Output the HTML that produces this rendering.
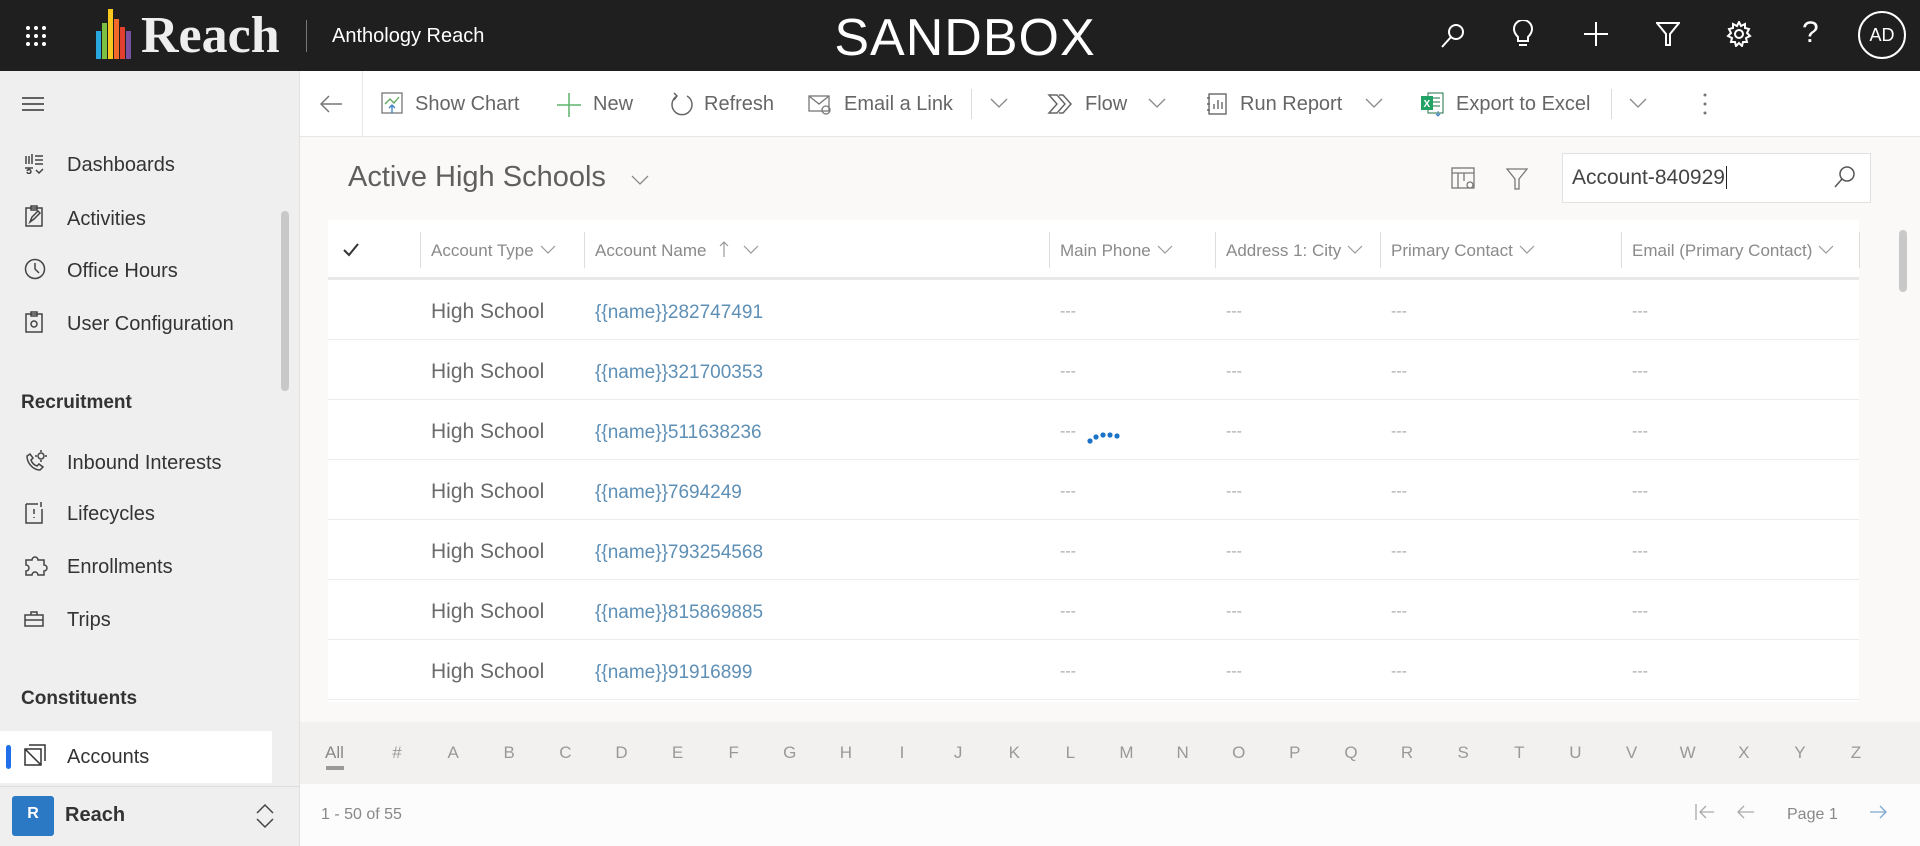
<!DOCTYPE html>
<html><head><meta charset="utf-8">
<style>
*{box-sizing:border-box;margin:0;padding:0}
body{width:1920px;height:846px;overflow:hidden;font-family:"Liberation Sans",sans-serif;background:#faf9f8;position:relative}
.a{position:absolute;white-space:nowrap}
#top{left:0;top:0;width:1920px;height:71px;background:#1f1f1f}
#side{left:0;top:71px;width:300px;height:775px;background:#efefef;border-right:1px solid #e1e1e1}
.nav{left:67px;font-size:20px;color:#333}
.sec{left:21px;font-size:19px;color:#333;font-weight:bold}
.ic{left:24px}
#cmd{left:300px;top:71px;width:1620px;height:66px;background:#fff;border-bottom:1px solid #e6e6e6}
.cb{font-size:20px;color:#666;top:93px}
.hd{font-size:17px;color:#8a8a8a;top:241px}
.hd svg{margin-left:6px;vertical-align:2px}
.sep{width:1px;background:#ddd}
.rt{font-size:21px;color:#6a6a6a}
.lk{font-size:19px;color:#5e8fb5}
.ds{font-size:16px;color:#aaa}
.al{font-size:17px;color:#999;top:743px}
</style></head><body>
<div id="top" class="a"></div>
<svg class="a" style="left:25px;top:25px" width="22" height="22" viewBox="0 0 22 22" fill="#fff"><circle cx="3" cy="3" r="2"/><circle cx="11" cy="3" r="2"/><circle cx="19" cy="3" r="2"/><circle cx="3" cy="11" r="2"/><circle cx="11" cy="11" r="2"/><circle cx="19" cy="11" r="2"/><circle cx="3" cy="19" r="2"/><circle cx="11" cy="19" r="2"/><circle cx="19" cy="19" r="2"/></svg>
<svg class="a" style="left:96px;top:9px" width="36" height="50"><rect x="0" y="22" width="5" height="28" fill="#29a8e0"/><rect x="6" y="14" width="5" height="36" fill="#7cc142"/><rect x="12" y="0" width="5" height="50" fill="#f7c81e"/><rect x="18" y="10" width="5" height="40" fill="#f26b2a"/><rect x="24" y="18" width="5" height="32" fill="#e1402f"/><rect x="30" y="22" width="5" height="28" fill="#7b4fa0"/></svg>
<div class="a" style="left:141px;top:6px;font-family:'Liberation Serif',serif;font-weight:bold;font-size:52px;color:#eee">Reach</div>
<div class="a" style="left:306px;top:20px;width:1px;height:32px;background:#777"></div>
<div class="a" style="left:332px;top:25px;font-size:20px;color:#fff">Anthology Reach</div>
<div class="a" style="left:0;width:1930px;text-align:center;top:8px;font-size:52px;color:#fff;letter-spacing:1px">SANDBOX</div>
<svg class="a" style="left:1440px;top:22px" width="26" height="28" fill="none" stroke="#fff" stroke-width="2"><circle cx="16" cy="10" r="7"/><path d="M11 15L2 25"/></svg>
<svg class="a" style="left:1512px;top:20px" width="22" height="28" fill="none" stroke="#fff" stroke-width="2"><path d="M6 17C2 13 2 10 2 9a9 9 0 0118 0c0 1 0 4-4 8v4H6z"/><path d="M7 25h8"/></svg>
<svg class="a" style="left:1583px;top:21px" width="26" height="26" stroke="#fff" stroke-width="2"><path d="M13 1v24M1 13h24"/></svg>
<svg class="a" style="left:1656px;top:21px" width="24" height="26" fill="none" stroke="#fff" stroke-width="2"><path d="M1 2h22L14 13v11h-4V13z"/></svg>
<svg class="a" style="left:1726px;top:21px" width="26" height="26" fill="none" stroke="#fff" stroke-width="2"><circle cx="13" cy="13" r="4"/><path d="M13 1l2 4 4-2 0 4 4 1-2 4 3 3-4 2 1 4-4 0-1 4-3-3-3 3-1-4-4 0 1-4-4-2 3-3-2-4 4-1 0-4 4 2z"/></svg>
<div class="a" style="left:1802px;top:16px;font-size:30px;color:#fff;font-weight:300">?</div>
<div class="a" style="left:1858px;top:11px;width:48px;height:48px;border:2px solid #fff;border-radius:50%;color:#fff;font-size:18px;text-align:center;line-height:44px">AD</div>

<div id="side" class="a"></div>
<svg class="a" style="left:22px;top:97px" width="22" height="14" stroke="#333" stroke-width="1.5"><path d="M0 1h22M0 7h22M0 13h22"/></svg>
<div class="a" style="left:281px;top:211px;width:8px;height:180px;background:#c8c8c8;border-radius:4px"></div>
<svg class="a ic" style="top:154px" width="20" height="20" fill="none" stroke="#444" stroke-width="1.5"><path d="M2 2v8M5 2v8M8 0v10M11 2h8M11 6h8M11 10h8M1 14h8M3 18a2 2 0 100-1M12 16l3 3 4-4"/></svg>
<div class="a nav" style="top:154px">Dashboards</div>
<svg class="a ic" style="top:205px" width="20" height="22" fill="none" stroke="#444" stroke-width="1.5"><rect x="2" y="3" width="16" height="18"/><path d="M7 1h6v4H7zM6 17l2-5 6-6 2 2-6 6z"/></svg>
<div class="a nav" style="top:208px">Activities</div>
<svg class="a ic" style="top:258px" width="22" height="22" fill="none" stroke="#444" stroke-width="1.5"><circle cx="11" cy="11" r="9.5"/><path d="M11 5v6l4 4"/></svg>
<div class="a nav" style="top:260px">Office Hours</div>
<svg class="a ic" style="top:311px" width="20" height="22" fill="none" stroke="#444" stroke-width="1.5"><rect x="2" y="3" width="16" height="18"/><path d="M7 1h6v4H7z"/><circle cx="10" cy="13" r="3"/></svg>
<div class="a nav" style="top:313px">User Configuration</div>
<div class="a sec" style="top:392px">Recruitment</div>
<svg class="a ic" style="top:450px" width="24" height="22" fill="none" stroke="#444" stroke-width="1.5"><path d="M3 6c0 7 6 14 13 14l3-3-4-3-2 2c-3-1-5-3-6-6l2-2-3-4z"/><circle cx="17" cy="6" r="3"/><path d="M17 0v2M17 10v2M11 6h2M21 6h2"/></svg>
<div class="a nav" style="top:452px">Inbound Interests</div>
<svg class="a ic" style="top:501px" width="20" height="24" fill="none" stroke="#444" stroke-width="1.5"><path d="M2 3h12M2 3v19h16V8"/><path d="M10 8v5M10 16v1M17 1v5"/></svg>
<div class="a nav" style="top:503px">Lifecycles</div>
<svg class="a ic" style="top:554px" width="24" height="22" fill="none" stroke="#444" stroke-width="1.5"><path d="M2 6h6a3 3 0 016 0h6v5a3 3 0 010 6v4h-6a3 3 0 00-6 0H2v-4a3 3 0 000-6z"/></svg>
<div class="a nav" style="top:556px">Enrollments</div>
<svg class="a ic" style="top:611px" width="20" height="16" fill="none" stroke="#444" stroke-width="1.5"><rect x="1" y="4" width="18" height="11"/><path d="M7 4V1h6v3M1 9h18"/></svg>
<div class="a nav" style="top:609px">Trips</div>
<div class="a sec" style="top:688px">Constituents</div>
<div class="a" style="left:0;top:731px;width:272px;height:52px;background:#fff"></div>
<div class="a" style="left:6px;top:745px;width:5px;height:24px;background:#1f6feb;border-radius:3px"></div>
<svg class="a ic" style="top:744px" width="22" height="22" fill="none" stroke="#333" stroke-width="1.5"><path d="M1 5h16v16H1zM5 1h16v16M1 5l16 16"/></svg>
<div class="a nav" style="top:746px">Accounts</div>
<div class="a" style="left:0;top:786px;width:300px;height:1px;background:#ddd"></div>
<div class="a" style="left:12px;top:796px;width:42px;height:40px;background:#2b78c5;border-radius:3px;color:#fff;font-weight:bold;font-size:16px;text-align:center;line-height:36px">R</div>
<div class="a" style="left:65px;top:804px;font-size:20px;color:#333;font-weight:bold">Reach</div>
<svg class="a" style="left:255px;top:803px" width="20" height="26" fill="none" stroke="#444" stroke-width="1.5"><path d="M2 10l8-8 8 8M2 16l8 8 8-8"/></svg>

<div id="cmd" class="a"></div>
<svg class="a" style="left:320px;top:95px" width="22" height="18" fill="none" stroke="#777" stroke-width="1.5"><path d="M22 9H2M9 1L1 9l8 8"/></svg>
<div class="a sep" style="left:362px;top:71px;height:66px;background:#e6e6e6"></div>
<svg class="a" style="left:381px;top:92px" width="22" height="22" fill="none" stroke="#777" stroke-width="1.3"><rect x="1" y="1" width="20" height="20"/><path d="M4 12l5-5 4 4 5-6" stroke="#5aa55a"/><path d="M11 21v-8M8 16l3-3 3 3" stroke="#3b7fc4"/></svg>
<div class="a cb" style="left:415px">Show Chart</div>
<svg class="a" style="left:557px;top:93px" width="24" height="24" stroke="#5fb36b" stroke-width="1.5"><path d="M12 0v24M0 12h24"/></svg>
<div class="a cb" style="left:593px">New</div>
<svg class="a" style="left:669px;top:92px" width="26" height="26" fill="none" stroke="#666" stroke-width="1.5"><path d="M8 4a10 10 0 1010 0M5 1l3 3-3 4"/></svg>
<div class="a cb" style="left:704px">Refresh</div>
<svg class="a" style="left:808px;top:94px" width="26" height="22" fill="none" stroke="#777" stroke-width="1.3"><rect x="1" y="2" width="20" height="15"/><path d="M1 2l10 8 10-8"/><circle cx="18" cy="16" r="4"/></svg>
<div class="a cb" style="left:844px">Email a Link</div>
<div class="a sep" style="left:971px;top:89px;height:30px"></div>
<svg class="a" style="left:990px;top:98px" width="18" height="10" fill="none" stroke="#888" stroke-width="1.3"><path d="M1 1l8 8 8-8"/></svg>
<svg class="a" style="left:1047px;top:93px" width="26" height="22" fill="none" stroke="#666" stroke-width="1.5"><path d="M2 2h8l8 9-8 9H2l8-9zM12 2h4l8 9-8 9h-4"/></svg>
<div class="a cb" style="left:1085px">Flow</div>
<svg class="a" style="left:1148px;top:98px" width="18" height="10" fill="none" stroke="#888" stroke-width="1.3"><path d="M1 1l8 8 8-8"/></svg>
<svg class="a" style="left:1206px;top:92px" width="22" height="24" fill="none" stroke="#666" stroke-width="1.4"><rect x="3" y="2" width="17" height="20"/><path d="M8 17v-5M12 17V8M16 17v-7M1 6h3M1 12h3M1 18h3"/></svg>
<div class="a cb" style="left:1240px">Run Report</div>
<svg class="a" style="left:1365px;top:98px" width="18" height="10" fill="none" stroke="#888" stroke-width="1.3"><path d="M1 1l8 8 8-8"/></svg>
<svg class="a" style="left:1420px;top:91px" width="26" height="26"><rect x="8" y="2" width="15" height="20" fill="#fff" stroke="#1d7044"/><path d="M11 7h9M11 11h9M11 15h9" stroke="#1d7044"/><rect x="1" y="5" width="12" height="14" fill="#21a366"/><text x="3.5" y="16" font-size="10" fill="#fff" font-family="Liberation Sans" font-weight="bold">X</text><path d="M18 20v5M16 23l2 2 2-2" stroke="#3b7fc4" fill="none"/></svg>
<div class="a cb" style="left:1456px">Export to Excel</div>
<div class="a sep" style="left:1611px;top:89px;height:30px"></div>
<svg class="a" style="left:1629px;top:98px" width="18" height="10" fill="none" stroke="#888" stroke-width="1.3"><path d="M1 1l8 8 8-8"/></svg>
<svg class="a" style="left:1702px;top:92px" width="6" height="24" fill="#777"><circle cx="3" cy="3" r="1.5"/><circle cx="3" cy="12" r="1.5"/><circle cx="3" cy="21" r="1.5"/></svg>

<div class="a" style="left:348px;top:161px;font-size:29px;color:#5f5f5f">Active High Schools</div>
<svg class="a" style="left:631px;top:175px" width="18" height="10" fill="none" stroke="#888" stroke-width="1.3"><path d="M1 1l8 8 8-8"/></svg>
<svg class="a" style="left:1451px;top:167px" width="26" height="24" fill="none" stroke="#777" stroke-width="1.3"><rect x="1" y="1" width="22" height="20"/><path d="M1 6h22M7 6v15M13 6v8"/><circle cx="19" cy="18" r="3" fill="#fff"/></svg>
<svg class="a" style="left:1506px;top:168px" width="22" height="22" fill="none" stroke="#777" stroke-width="1.3"><path d="M1 1h20L13 11v10h-4V11z"/></svg>
<div class="a" style="left:1562px;top:153px;width:309px;height:50px;background:#fff;border:1px solid #e1e1e1"></div>
<div class="a" style="left:1572px;top:166px;font-size:21px;color:#444">Account-840929<span style="border-left:1.5px solid #222;margin-left:1px"></span></div>
<svg class="a" style="left:1834px;top:165px" width="22" height="24" fill="none" stroke="#555" stroke-width="1.5"><circle cx="13" cy="9" r="7"/><path d="M8 14l-7 8"/></svg>

<div class="a" style="left:328px;top:220px;width:1531px;height:482px;background:#fff"></div>
<svg class="a" style="left:343px;top:243px" width="16" height="14" fill="none" stroke="#333" stroke-width="2"><path d="M1 7l5 5 9-11"/></svg>
<div class="a sep" style="left:420px;top:232px;height:36px"></div>
<div class="a sep" style="left:584px;top:232px;height:36px"></div>
<div class="a sep" style="left:1049px;top:232px;height:36px"></div>
<div class="a sep" style="left:1215px;top:232px;height:36px"></div>
<div class="a sep" style="left:1380px;top:232px;height:36px"></div>
<div class="a sep" style="left:1621px;top:232px;height:36px"></div>
<div class="a sep" style="left:1859px;top:232px;height:36px"></div>
<div class="a hd" style="left:431px">Account Type<svg width="16" height="9" fill="none" stroke="#999" stroke-width="1.2"><path d="M1 1l7 7 7-7"/></svg></div>
<div class="a hd" style="left:595px">Account Name<svg style="margin-left:12px;vertical-align:-1px" width="10" height="16" fill="none" stroke="#999" stroke-width="1.2"><path d="M5 16V1M1 5l4-4 4 4"/></svg><svg style="margin-left:14px" width="16" height="9" fill="none" stroke="#999" stroke-width="1.2"><path d="M1 1l7 7 7-7"/></svg></div>
<div class="a hd" style="left:1060px">Main Phone<svg width="16" height="9" fill="none" stroke="#999" stroke-width="1.2"><path d="M1 1l7 7 7-7"/></svg></div>
<div class="a hd" style="left:1226px">Address 1: City<svg width="16" height="9" fill="none" stroke="#999" stroke-width="1.2"><path d="M1 1l7 7 7-7"/></svg></div>
<div class="a hd" style="left:1391px">Primary Contact<svg width="16" height="9" fill="none" stroke="#999" stroke-width="1.2"><path d="M1 1l7 7 7-7"/></svg></div>
<div class="a hd" style="left:1632px">Email (Primary Contact)<svg width="16" height="9" fill="none" stroke="#999" stroke-width="1.2"><path d="M1 1l7 7 7-7"/></svg></div>
<div class="a" style="left:328px;top:277px;width:1531px;height:3px;background:#e8e8e8"></div>
<div class="a" style="left:1899px;top:230px;width:8px;height:62px;background:#c8c8c8;border-radius:4px"></div>

<div id="rows"></div>
<script>
var names=["282747491","321700353","511638236","7694249","793254568","815869885","91916899"];
var h="";
for(var i=0;i<7;i++){var y=280+i*60;
h+='<div class="a rt" style="left:431px;top:'+(y+20)+'px">High School</div>';
h+='<div class="a lk" style="left:595px;top:'+(y+22)+'px">{{name}}'+names[i]+'</div>';
[1060,1226,1391,1632].forEach(function(x){h+='<div class="a ds" style="left:'+x+'px;top:'+(y+23)+'px">---</div>';});
h+='<div class="a" style="left:328px;top:'+(y+59)+'px;width:1531px;height:1px;background:#ececec"></div>';}
document.getElementById("rows").outerHTML=h;
</script>
<svg class="a" style="left:1086px;top:429px" width="40" height="16" fill="#1a73c8"><circle cx="4" cy="12" r="2.6"/><circle cx="10" cy="8" r="2.6"/><circle cx="17" cy="6" r="2.6"/><circle cx="24" cy="6" r="2.6"/><circle cx="31" cy="7" r="2.6"/></svg>

<div class="a" style="left:300px;top:722px;width:1620px;height:62px;background:#f2f1f0"></div>
<div id="alpha"></div>
<script>
var L=["#","A","B","C","D","E","F","G","H","I","J","K","L","M","N","O","P","Q","R","S","T","U","V","W","X","Y","Z"];var s='<div class="a al" style="left:325px;color:#888">All</div><div class="a" style="left:326px;top:766px;width:18px;height:4px;background:#999"></div>';
for(var i=0;i<L.length;i++){var cx=397+i*(1459/26);s+='<div class="a al" style="left:'+(cx-20)+'px;width:40px;text-align:center">'+L[i]+'</div>';}
document.getElementById("alpha").outerHTML=s;
</script>
<div class="a" style="left:300px;top:784px;width:1620px;height:62px;background:#fcfcfc"></div>
<div class="a" style="left:321px;top:806px;font-size:16px;color:#888">1 - 50 of 55</div>
<svg class="a" style="left:1695px;top:803px" width="20" height="18" fill="none" stroke="#aaa" stroke-width="1.3"><path d="M1 1v16M19 9H5M11 3L5 9l6 6"/></svg>
<svg class="a" style="left:1735px;top:803px" width="20" height="18" fill="none" stroke="#aaa" stroke-width="1.3"><path d="M19 9H3M9 3L3 9l6 6"/></svg>
<div class="a" style="left:1787px;top:806px;font-size:16px;color:#888">Page 1</div>
<svg class="a" style="left:1869px;top:803px" width="20" height="18" fill="none" stroke="#7ea8cf" stroke-width="1.3"><path d="M1 9h16M11 3l6 6-6 6"/></svg>
</body></html>
